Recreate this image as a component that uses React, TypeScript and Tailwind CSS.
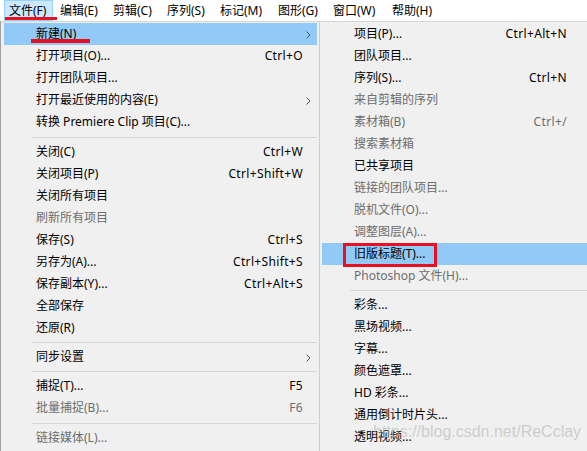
const menuBar = [
  { label: "文件(F)", w: "w-[49px] mr-[3px]", active: true },
  { label: "编辑(E)", w: "w-[53px]" },
  { label: "剪辑(C)", w: "w-[54px]" },
  { label: "序列(S)", w: "w-[53px]" },
  { label: "标记(M)", w: "w-[58px]" },
  { label: "图形(G)", w: "w-[55px]" },
  { label: "窗口(W)", w: "w-[59px]" },
  { label: "帮助(H)", w: "w-[50px]" },
];

type Item =
  | { sep: true; h?: string }
  | {
      sep?: false;
      label: string;
      shortcut?: string;
      disabled?: boolean;
      arrow?: boolean;
      active?: boolean;
      underline?: boolean;
      boxed?: boolean;
    };

const fileMenu: Item[] = [
  { label: "新建(N)", arrow: true, active: true, underline: true },
  { label: "打开项目(O)...", shortcut: "Ctrl+O" },
  { label: "打开团队项目..." },
  { label: "打开最近使用的内容(E)", arrow: true },
  { label: "转换 Premiere Clip 项目(C)..." },
  { sep: true, h: "h-[8px]" },
  { label: "关闭(C)", shortcut: "Ctrl+W" },
  { label: "关闭项目(P)", shortcut: "Ctrl+Shift+W" },
  { label: "关闭所有项目" },
  { label: "刷新所有项目", disabled: true },
  { label: "保存(S)", shortcut: "Ctrl+S" },
  { label: "另存为(A)...", shortcut: "Ctrl+Shift+S" },
  { label: "保存副本(Y)...", shortcut: "Ctrl+Alt+S" },
  { label: "全部保存" },
  { label: "还原(R)" },
  { sep: true },
  { label: "同步设置", arrow: true },
  { sep: true },
  { label: "捕捉(T)...", shortcut: "F5" },
  { label: "批量捕捉(B)...", shortcut: "F6", disabled: true },
  { sep: true, h: "h-[8px]" },
  { label: "链接媒体(L)...", disabled: true },
];

const newMenu: Item[] = [
  { label: "项目(P)...", shortcut: "Ctrl+Alt+N" },
  { label: "团队项目..." },
  { label: "序列(S)...", shortcut: "Ctrl+N" },
  { label: "来自剪辑的序列", disabled: true },
  { label: "素材箱(B)", shortcut: "Ctrl+/", disabled: true },
  { label: "搜索素材箱", disabled: true },
  { label: "已共享项目" },
  { label: "链接的团队项目...", disabled: true },
  { label: "脱机文件(O)...", disabled: true },
  { label: "调整图层(A)...", disabled: true },
  { label: "旧版标题(T)...", active: true, boxed: true },
  { label: "Photoshop 文件(H)...", disabled: true },
  { sep: true },
  { label: "彩条..." },
  { label: "黑场视频..." },
  { label: "字幕..." },
  { label: "颜色遮罩..." },
  { label: "HD 彩条..." },
  { label: "通用倒计时片头..." },
  { label: "透明视频..." },
];

function Chevron() {
  return (
    <svg width="5" height="8" viewBox="0 0 5 8" className="absolute right-[6px] top-[8px]">
      <path d="M0.5 0.5 L4 4 L0.5 7.5" fill="none" stroke="#555" strokeWidth="1" />
    </svg>
  );
}

function MenuList({ items, pr }: { items: Item[]; pr: string }) {
  return (
    <div className="flex flex-col">
      {items.map((it, i) =>
        it.sep ? (
          <div key={i} className={`flex items-center pl-[28px] ${it.h ?? "h-[7px]"}`}>
            <div className="h-px flex-1 bg-[#d7d7d7]" />
          </div>
        ) : (
          <div
            key={i}
            className={`relative flex h-[22px] items-center pl-[32px] ${pr} ${
              it.active ? "bg-[#91c9f7]" : ""
            } ${it.disabled ? "text-[#6d6d6d]" : "text-black"}`}
          >
            <span className="whitespace-pre">{it.label}</span>
            {it.shortcut && (
              <span className="ml-auto whitespace-pre tracking-[0.35px]">{it.shortcut}</span>
            )}
            {it.arrow && <Chevron />}
            {it.underline && (
              <div className="absolute left-[27px] top-[16px] h-[4px] w-[59px] bg-[#e81123]" />
            )}
            {it.boxed && (
              <div className="absolute left-[21px] top-0 h-[24px] w-[94px] border-[3px] border-[#e81123]" />
            )}
          </div>
        )
      )}
    </div>
  );
}

export default function App() {
  return (
    <div
      className="relative h-[451px] w-[587px] overflow-hidden bg-white text-[12px] leading-[22px]"
      style={{ fontFamily: "'Noto Sans', 'Noto Sans CJK SC', sans-serif" }}
    >
      <div className="relative flex h-[21px] items-stretch pl-[4px]">
        {menuBar.map((m) => (
          <div
            key={m.label}
            className={`flex items-center pl-[4px] leading-[20px] ${m.w} ${
              m.active ? "border border-[#99d1ff] bg-[#cce8ff] pl-[3px]" : ""
            }`}
          >
            {m.label}
          </div>
        ))}
        <div className="absolute left-[5px] top-[17px] h-[3px] w-[52px] bg-[#e81123]" />
      </div>

      <div className="flex h-[430px]">
        <div className="w-[319px] border-l border-t border-l-[#a0a0a0] border-t-[#d5d5d5] bg-[#f0f0f0] pl-[3px] pr-[2px] pt-[1px]">
          <MenuList items={fileMenu} pr="pr-[14px]" />
        </div>
        <div className="flex-1 border-l border-t border-l-[#cccccc] border-t-[#d5d5d5] bg-[#f0f0f0] pl-[2px] pt-[1px]">
          <MenuList items={newMenu} pr="pr-[20px]" />
        </div>
      </div>

      <div
        className="pointer-events-none absolute left-[373px] top-[422px] text-[16px] leading-[20px] text-[#b4b4b4]/60"
        style={{ fontFamily: "'Liberation Sans', sans-serif" }}
      >
        https://blog.csdn.net/ReCclay
      </div>
    </div>
  );
}
